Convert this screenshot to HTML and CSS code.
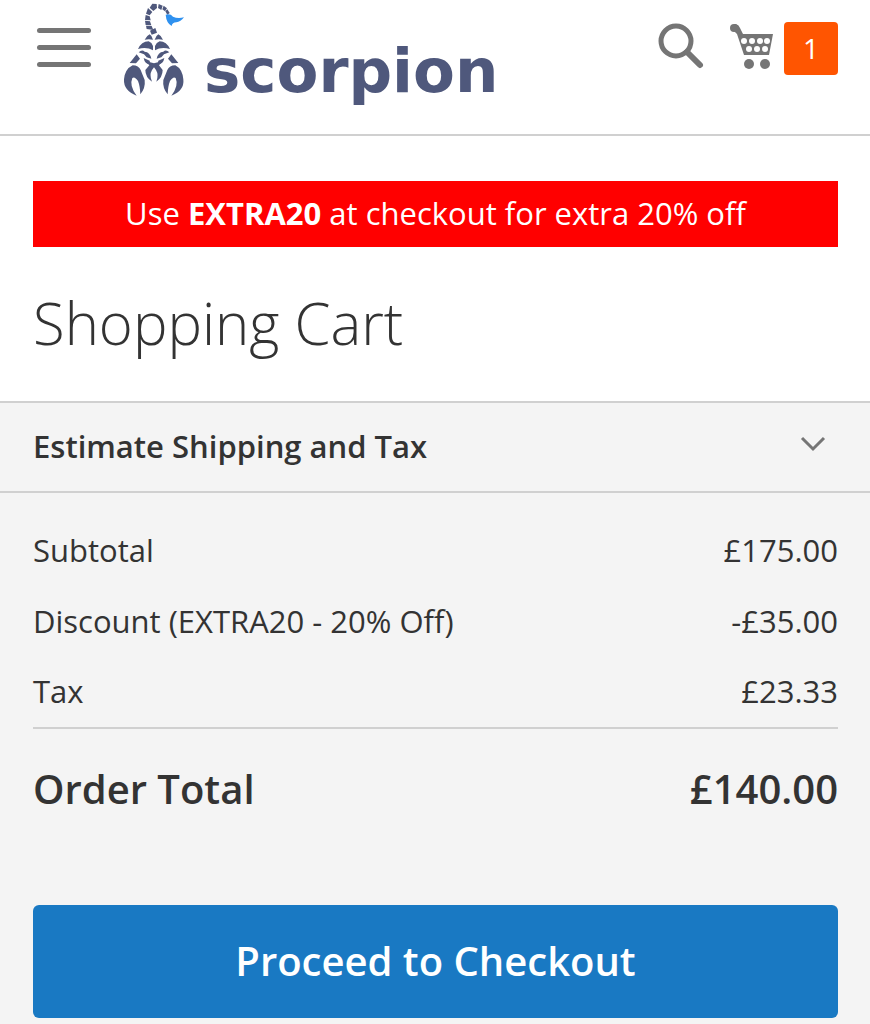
FILE: index.html
```html
<!DOCTYPE html>
<html lang="en">
<head>
    <meta charset="UTF-8">
    <meta name="viewport" content="width=device-width, initial-scale=1.0">
    <title>Shopping Cart</title>
    <link rel="stylesheet" href="styles.css">
</head>
<body>
    <header class="page-header">
        <button type="button" class="nav-toggle" aria-label="Toggle menu">
            <span></span>
            <span></span>
            <span></span>
        </button>
        <a href="#" class="logo">
            <svg class="logo-mark" viewBox="0 0 270 330" aria-hidden="true">
                <!-- tail -->
                <g fill="#4f587c">
                    <path d="M146 12l12 5-4 13-10-6z"/>
                    <path d="M161 17l10 8-6 9-8-6z"/>
                    <path d="M172 28l7 11-7 5-6-10z"/>
                    <path d="M127 11l13 1 1 12-11 9-11-10z"/>
                    <path d="M114 24l13 12-8 10-11-5z"/>
                    <path d="M107 45l12 4 3 12-17-1z"/>
                    <path d="M105 62l15 2 4 12-17-1z"/>
                    <path d="M108 77l17 1 5 12-20-3z"/>
                    <path d="M120 92l16-8 5 14-16 6z"/>
                </g>
                <path fill="#2f91ef" d="M167 44q14-4 22 6 14 7 33 2-10 13-23 15-12 0-14 11-16-9-18-34z"/>
                <g fill="#4f587c">
                    <!-- body plates -->
                    <path d="M129 119q-12-3-25 0 5-11 15-16 8 5 10 16zM134 119q3-11 11-16 10 5 14 16-13-3-25 0z"/>
                    <path d="M129 151q-19-11-45-4 10-22 32-23 10 4 13 14zM135 151q18-11 45-4-10-22-31-23-10 4-14 14z"/>
                    <!-- arms -->
                    <path d="M86 157q10-10 18-2 16 1 20 21l-14-4-8-9zM178 157q-10-10-18-2-16 1-20 21l14-4 8-9z"/>
                    <path d="M101 174l18 8 2 11q-17 0-20-19zM163 174l-18 8-2 11q17 0 20-19z"/>
                    <!-- head and small pincers -->
                    <path d="M106 183l26 7 26-7-11 13 11 14q0 22-19 35 8-20-1-35l-6-8-6 8q-9 15 0 35-20-13-20-35l12-14z"/>
                    <!-- claws -->
                    <path d="M80 163l10 13-12 14-19-1zM184 163l-10 13 12 14 19-1z"/>
                    <path d="M68 196q18 0 24 14l12 30q3 24-13 43-1-25-7-40-10-15-17-9-10 23 13 53-40-15-38-49 3-31 26-42z"/>
                    <path d="M196 196q-18 0-24 14l-12 30q-3 24 13 43 1-25 7-40 10-15 17-9 10 23-13 53 40-15 36-49-3-31-24-42z"/>
                </g>
            </svg>
            <span class="logo-name">scorpion</span>
        </a>
        <div class="header-tools">
            <button type="button" class="search-toggle" aria-label="Search">
                <svg width="48" height="48" viewBox="0 0 48 48" aria-hidden="true">
                    <g fill="none" stroke="#757575" stroke-width="5">
                        <circle cx="19" cy="19" r="15"/>
                        <path d="M30 30l13 13" stroke-width="6" stroke-linecap="round"/>
                    </g>
                </svg>
            </button>
            <a href="#" class="minicart">
                <svg width="46" height="48" viewBox="0 0 46 48" aria-label="My cart" role="img">
                    <g fill="#757575">
                        <circle cx="5" cy="6" r="4"/>
                        <path d="M5 2h2q3 1 4 4l3 6h30l-4 21H15L8 12 5 9z"/>
                        <circle cx="20" cy="42" r="5"/>
                        <circle cx="36" cy="42" r="5"/>
                    </g>
                    <g fill="#fff">
                        <circle cx="15" cy="19" r="3"/>
                        <circle cx="23" cy="19" r="3"/>
                        <circle cx="31" cy="19" r="3"/>
                        <circle cx="38" cy="19" r="3"/>
                        <circle cx="20" cy="27" r="3"/>
                        <circle cx="28" cy="27" r="3"/>
                        <circle cx="36" cy="27" r="3"/>
                    </g>
                </svg>
                <span class="counter">1</span>
            </a>
        </div>
    </header>

    <main>
        <div class="page-top">
            <p class="promo">Use <strong>EXTRA20</strong> at checkout for extra 20% off</p>
            <h1>Shopping Cart</h1>
        </div>

        <section class="cart-summary">
            <button type="button" class="estimate" aria-expanded="false">
                Estimate Shipping and Tax
                <svg width="26" height="20" viewBox="0 0 26 20" aria-hidden="true">
                    <path d="M2 2l11 11L24 2" fill="none" stroke="#757575" stroke-width="3"/>
                </svg>
            </button>

            <div class="cart-totals">
                <table>
                    <tbody>
                        <tr>
                            <th scope="row">Subtotal</th>
                            <td>£175.00</td>
                        </tr>
                        <tr>
                            <th scope="row">Discount (EXTRA20 - 20% Off)</th>
                            <td>-£35.00</td>
                        </tr>
                        <tr>
                            <th scope="row">Tax</th>
                            <td>£23.33</td>
                        </tr>
                    </tbody>
                    <tfoot>
                        <tr>
                            <th scope="row">Order Total</th>
                            <td>£140.00</td>
                        </tr>
                    </tfoot>
                </table>
                <button type="button" class="checkout">Proceed to Checkout</button>
            </div>
        </section>
    </main>
</body>
</html>
```
FILE: styles.css
```css
* {
    box-sizing: border-box;
}
body {
    margin: 0;
    background-color: #f4f4f4;
    color: #333;
    font-family: "Open Sans", "Liberation Sans", sans-serif;
    font-size: 31px;
    line-height: 42px;
}
button {
    border: none;
    padding: 0;
    background: none;
    color: inherit;
    font-family: inherit;
    cursor: pointer;
}
a {
    color: inherit;
    text-decoration: none;
}
svg {
    display: block;
}

/* header */
.page-header {
    display: flex;
    align-items: flex-start;
    height: 136px;
    padding: 0 32px 0 37px;
    background-color: #fff;
    border-bottom: 2px solid #d0d0d0;
}
.nav-toggle {
    display: flex;
    flex-direction: column;
    gap: 12px;
    margin-top: 28px;
}
.nav-toggle span {
    width: 54px;
    height: 5px;
    border-radius: 3px;
    background-color: #757575;
}
.logo {
    display: flex;
    margin-left: 19px;
}
.logo-mark {
    width: 90px;
    height: 110px;
}
.logo-name {
    margin-top: 41px;
    margin-left: 4px;
    color: #4f587c;
    font-family: "DejaVu Sans", sans-serif;
    font-size: 61px;
    font-weight: bold;
    line-height: 60px;
}
.header-tools {
    display: flex;
    align-items: flex-start;
    gap: 24px;
    margin-top: 22px;
    margin-left: auto;
}
.minicart {
    display: flex;
    gap: 9px;
}
.counter {
    width: 54px;
    height: 53px;
    border-radius: 4px;
    background-color: #ff5501;
    color: #fff;
    font-size: 28px;
    line-height: 52px;
    text-align: center;
}

/* promo and title */
.page-top {
    padding: 45px 32px 38px 33px;
    background-color: #fff;
}
.promo {
    margin: 0;
    padding: 11px 12px 13px;
    background-color: #f00;
    color: #fff;
    text-align: center;
}
h1 {
    margin: 36px 0 0;
    font-size: 58px;
    font-weight: 300;
    line-height: 80px;
}

/* summary */
.estimate {
    display: flex;
    justify-content: space-between;
    align-items: center;
    width: 100%;
    height: 92px;
    padding: 0 44px 2px 33px;
    border-top: 2px solid #d0d0d0;
    border-bottom: 2px solid #d0d0d0;
    font-size: 31px;
    font-weight: 600;
    text-align: left;
}
.cart-totals {
    padding: 22px 32px 6px 33px;
}
table {
    width: 100%;
    border-collapse: collapse;
}
th,
td {
    height: 71px;
    padding: 0 0 2px;
    font-weight: 400;
    text-align: left;
}
td {
    text-align: right;
}
tfoot th,
tfoot td {
    height: 122px;
    border-top: 2px solid #d0d0d0;
    font-size: 40px;
    font-weight: 600;
}
.checkout {
    display: block;
    width: 100%;
    margin-top: 55px;
    padding: 27px 28px 29px;
    border-radius: 6px;
    background-color: #1979c3;
    color: #fff;
    font-size: 40px;
    font-weight: 600;
    line-height: 57px;
}
```
